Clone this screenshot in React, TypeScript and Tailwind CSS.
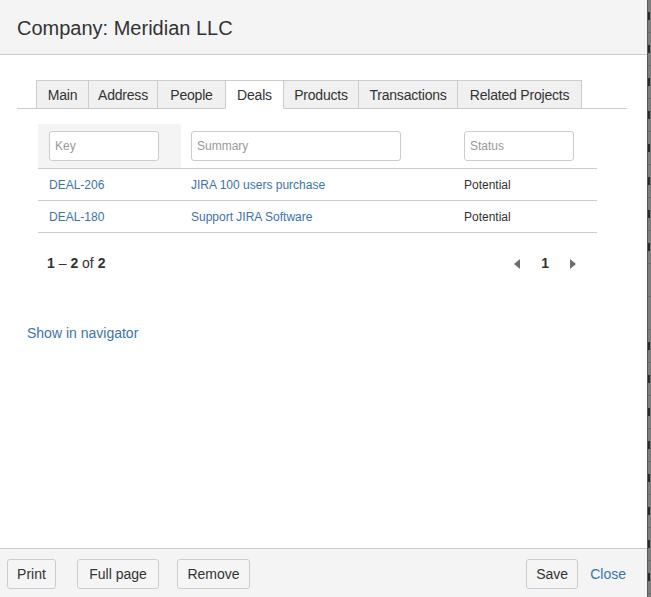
import React from "react";

const link = "text-[#3b73af]";

function Tab({ label, w, active }: { label: string; w: string; active?: boolean }) {
  return (
    <div
      className={
        "h-[29px] flex items-center justify-center whitespace-nowrap border border-[#cccccc] -ml-px first:ml-0 text-[14px] tracking-[-0.2px] text-[#333] " +
        w +
        " " +
        (active ? "bg-white border-b-white relative z-10" : "bg-[#f0f0f0]")
      }
    >
      <span className="pt-[2px]">{label}</span>
    </div>
  );
}

function Btn({ label, w }: { label: string; w: string }) {
  return (
    <button
      className={
        "h-[30px] border border-[#cccccc] rounded-[3px] bg-[#f5f5f5] text-[14px] text-[#333] flex items-center justify-center " +
        w
      }
    >
      {label}
    </button>
  );
}

function Field({ ph, w }: { ph: string; w: string }) {
  return (
    <div
      className={
        "h-[30px] border border-[#cccccc] rounded-[3px] bg-white flex items-center pl-[5px] text-[12px] text-[#999] " +
        w
      }
    >
      {ph}
    </div>
  );
}

const rows = [
  { key: "DEAL-206", summary: "JIRA 100 users purchase", status: "Potential" },
  { key: "DEAL-180", summary: "Support JIRA Software", status: "Potential" },
];

const stripMarks = ["9", "5", "8", "1", "5", "9", "5", "3", "", "", "9", "3", "1", "2", "H", "4", "5", "4"];

export default function App() {
  return (
    <div
      className="w-[651px] h-[597px] flex overflow-hidden bg-white"
      style={{ fontFamily: '"Liberation Sans", Arial, sans-serif' }}
    >
      <div className="w-[647px] h-full flex flex-col">
        {/* header */}
        <div className="h-[55px] shrink-0 bg-[#f4f4f4] border-b border-[#cccccc] flex items-center pl-[17px]">
          <h1 className="text-[20px] text-[#333] leading-none pt-[2px]">Company: Meridian LLC</h1>
        </div>

        {/* body */}
        <div className="flex-1 flex flex-col">
          {/* tabs */}
          <div className="mt-[25px] ml-[17px] w-[610px] border-b border-[#cccccc] pl-[19px] flex items-end">
            <div className="flex -mb-px">
              <Tab label="Main" w="w-[53px]" />
              <Tab label="Address" w="w-[70px]" />
              <Tab label="People" w="w-[69px]" />
              <Tab label="Deals" w="w-[59px]" active />
              <Tab label="Products" w="w-[76px]" />
              <Tab label="Transactions" w="w-[100px]" />
              <Tab label="Related Projects" w="w-[125px]" />
            </div>
          </div>

          {/* table */}
          <div className="mt-[15px] ml-[38px] w-[559px]">
            <div className="h-[45px] flex border-b border-[#cccccc]">
              <div className="w-[143px] bg-[#f4f4f4] pl-[11px] pt-[7px]">
                <Field ph="Key" w="w-[110px]" />
              </div>
              <div className="w-[283px] pl-[10px] pt-[7px]">
                <Field ph="Summary" w="w-[210px]" />
              </div>
              <div className="flex-1 pt-[7px]">
                <Field ph="Status" w="w-[110px]" />
              </div>
            </div>
            {rows.map((r) => (
              <div key={r.key} className="h-[32px] flex items-center border-b border-[#cccccc] text-[12px]">
                <div className={"w-[143px] pl-[11px] " + link}>{r.key}</div>
                <div className={"w-[283px] pl-[10px] " + link}>{r.summary}</div>
                <div className="flex-1 text-[#333]">{r.status}</div>
              </div>
            ))}
            <div className="mt-[20px] h-[21px] flex items-center text-[14px] text-[#333]">
              <div className="pl-[9px] flex-1">
                <b>1</b> – <b>2</b> of <b>2</b>
              </div>
              <div className="flex items-center pr-[21px]">
                <svg width="6" height="10" viewBox="0 0 6 10">
                  <path d="M6 0 L0 5 L6 10 Z" fill="#707070" />
                </svg>
                <span className="font-bold mx-[21px]">1</span>
                <svg width="6" height="10" viewBox="0 0 6 10">
                  <path d="M0 0 L6 5 L0 10 Z" fill="#707070" />
                </svg>
              </div>
            </div>
          </div>

          <div className={"mt-[49px] ml-[27px] text-[14px] " + link}>Show in navigator</div>
        </div>

        {/* footer */}
        <div className="h-[49px] shrink-0 bg-[#f4f4f4] border-t border-[#cccccc] flex items-start pt-[10px] pl-[7px] pr-[21px]">
          <Btn label="Print" w="w-[49px]" />
          <div className="ml-[21px]">
            <Btn label="Full page" w="w-[82px]" />
          </div>
          <div className="ml-[18px]">
            <Btn label="Remove" w="w-[73px]" />
          </div>
          <div className="flex-1" />
          <Btn label="Save" w="w-[52px]" />
          <div className={"ml-[12px] h-[30px] flex items-center text-[14px] " + link}>Close</div>
        </div>
      </div>

      {/* page behind the dialog */}
      <div className="w-[4px] h-full bg-[#7d7d7d] border-l border-[#5a5a5a] flex flex-col overflow-hidden">
        {stripMarks.map((m, i) => (
          <div key={i} className="h-[33px] shrink-0 border-b border-[#6c6c6c] flex items-center">
            {m && <div className="w-[2px] h-[8px] bg-[#2a2a2a]" />}
          </div>
        ))}
      </div>
    </div>
  );
}
